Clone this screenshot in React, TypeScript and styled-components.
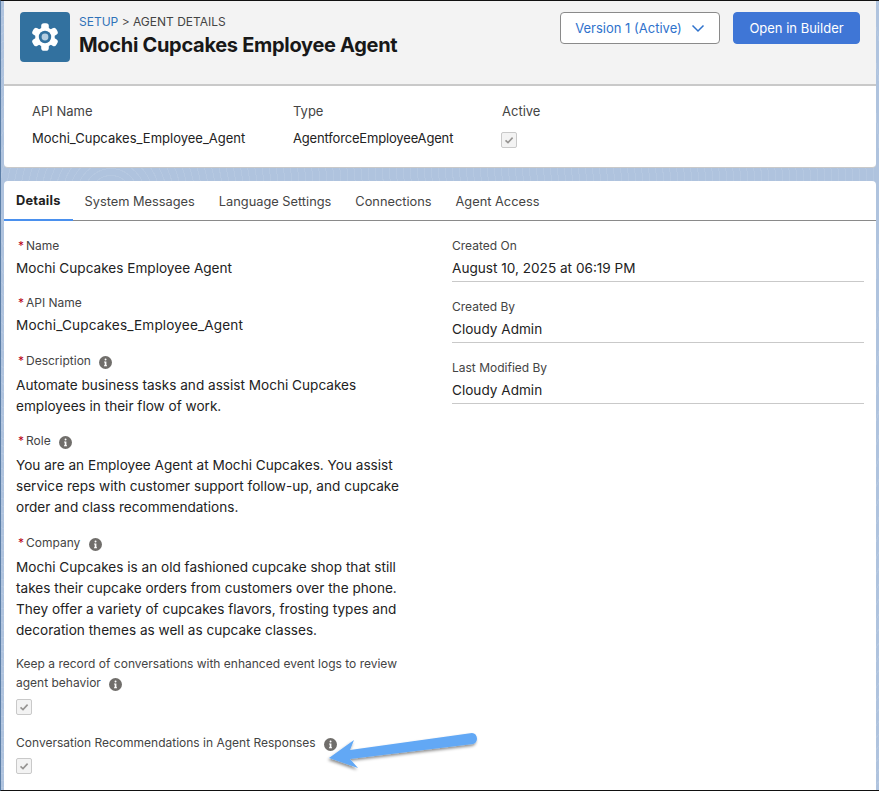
import styled, { createGlobalStyle } from "styled-components";

const GlobalStyle = createGlobalStyle`
  html, body {
    margin: 0;
    padding: 0;
    background: #000;
  }
  * { box-sizing: border-box; }
`;

const Frame = styled.div`
  position: relative;
  width: 879px;
  height: 791px;
  overflow: hidden;
  padding: 0 3px 0 3px;
  background-color: #afc3de;
  background-image: repeating-radial-gradient(
    circle at 110px 195px,
    rgba(255, 255, 255, 0) 0 6px,
    rgba(255, 255, 255, 0.08) 6px 7px
  );
  border-top: 1px solid #111;
  border-bottom: 1px solid #111;
  border-left: 1px solid #5c7fa8;
  font-family: Inter, "Liberation Sans", sans-serif;
  color: #181818;
`;

const Header = styled.header`
  height: 85px;
  padding: 11px 16px 0 16px;
  background: #f3f3f3;
  border-bottom: 2px solid #c9c9c9;
  display: flex;
  justify-content: space-between;
  align-items: flex-start;
`;

const TitleGroup = styled.div`
  display: flex;
  gap: 9px;
`;

const IconTile = styled.div`
  width: 50px;
  height: 50px;
  border-radius: 4px;
  background: #32719f;
  display: flex;
  align-items: center;
  justify-content: center;
`;

const Breadcrumb = styled.div`
  margin-top: 2px;
  font-size: 12px;
  line-height: 16px;
  color: #444;
`;

const CrumbLink = styled.span`
  color: #2f72b8;
`;

const Title = styled.h1`
  margin: 3px 0 0;
  font-size: 20px;
  line-height: 24px;
  font-weight: 700;
  letter-spacing: -0.3px;
  color: #181818;
`;

const Actions = styled.div`
  display: flex;
  gap: 13px;
`;

const Button = styled.button<{ $primary?: boolean }>`
  height: 32px;
  border-radius: 4px;
  font-family: inherit;
  font-size: 13px;
  display: flex;
  align-items: center;
  justify-content: center;
  gap: 9px;
  padding: 0;
  width: ${(p) => (p.$primary ? "127px" : "160px")};
  background: ${(p) => (p.$primary ? "#3f76d6" : "#fff")};
  color: ${(p) => (p.$primary ? "#fff" : "#2f72cc")};
  border: 1px solid ${(p) => (p.$primary ? "#3f76d6" : "#8a8a8a")};
`;

const SummaryPanel = styled.section`
  height: 82px;
  padding: 16px 0 0 28px;
  background: #fff;
  border-bottom: 1px solid #c9c9c9;
  border-radius: 0 0 4px 4px;
  display: grid;
  grid-template-columns: 261px 209px 1fr;
  grid-template-rows: 18px 1fr;
  row-gap: 9px;
  font-size: 13px;
`;

const SummaryLabel = styled.div`
  line-height: 18px;
  color: #444;
`;

const SummaryValue = styled.div<{ $tight?: boolean }>`
  line-height: 18px;
  color: #222;
  letter-spacing: ${(p) => (p.$tight ? "-0.17px" : "0")};
`;

const SummaryCheck = styled.div`
  margin: 3px 0 0 -1px;
`;

const DetailCard = styled.section`
  margin-top: 13px;
  height: 609px;
  background: #fff;
  border-radius: 4px 4px 0 0;
`;

const TabBar = styled.nav`
  height: 40px;
  border-bottom: 1px solid #8a8a8a;
  display: flex;
`;

const Tab = styled.div<{ $active?: boolean }>`
  height: 40px;
  padding: 0 12px;
  display: flex;
  align-items: center;
  font-size: 12.8px;
  font-weight: ${(p) => (p.$active ? 700 : 400)};
  letter-spacing: ${(p) => (p.$active ? "0.2px" : "0")};
  color: ${(p) => (p.$active ? "#222" : "#444")};
  border-bottom: ${(p) => (p.$active ? "2px solid #4a90ee" : "none")};
`;

const Columns = styled.div`
  display: grid;
  grid-template-columns: 436px 412px;
  padding-left: 12px;
`;

const LeftColumn = styled.div`
  padding-top: 17px;
  width: 392px;
`;

const RightColumn = styled.div`
  padding-top: 17px;
`;

const Field = styled.div<{ $gap?: number }>`
  margin-bottom: ${(p) => p.$gap ?? 0}px;
`;

const Label = styled.div<{ $wrapped?: boolean }>`
  font-size: 12px;
  line-height: ${(p) => (p.$wrapped ? "19px" : "16px")};
  color: #444;
`;

const Required = styled.span`
  color: #ba0517;
  margin: 0 2px;
`;

const Value = styled.div<{ $top?: number; $wide?: boolean }>`
  margin-top: ${(p) => p.$top ?? 4}px;
  font-size: 13.6px;
  line-height: 21px;
  color: #222;
  letter-spacing: ${(p) => (p.$wide ? "0.14px" : "0")};
`;

const MetaField = styled.div`
  height: 61px;
`;

const MetaValue = styled.div`
  margin-top: 4px;
  height: 24px;
  font-size: 13.6px;
  line-height: 21px;
  color: #222;
  border-bottom: 1px solid #c9c9c9;
`;

const InfoDot = styled.span`
  display: inline-flex;
  vertical-align: -2px;
  margin-left: 8.5px;
  width: 13px;
  height: 13px;
  border-radius: 50%;
  background: #706e6b;
  color: #fff;
  align-items: center;
  justify-content: center;
`;

const CheckBox = styled.span`
  display: flex;
  width: 16px;
  height: 16px;
  border: 1px solid #c9c9c9;
  border-radius: 2px;
  background: #f3f3f3;
  align-items: center;
  justify-content: center;
`;

const CheckRow = styled.div`
  margin-top: 7px;
`;

const Arrow = styled.svg`
  position: absolute;
  left: 320px;
  top: 724px;
  overflow: visible;
`;

function Info() {
  return (
    <InfoDot>
      <svg width="9" height="9" viewBox="0 0 9 9">
        <rect x="3.6" y="0.6" width="1.9" height="1.9" rx="0.9" fill="#fff" />
        <path d="M3.1 3.6h2.3v3.6h.6v1H3v-1h.7V4.6h-.6z" fill="#fff" />
      </svg>
    </InfoDot>
  );
}

function Check() {
  return (
    <CheckBox>
      <svg width="10" height="10" viewBox="0 0 10 10">
        <path d="M1.5 5.3 4 7.6 8.6 2.6" fill="none" stroke="#969492" strokeWidth="1.6" />
      </svg>
    </CheckBox>
  );
}

function Gear() {
  return (
    <svg width="28" height="28" viewBox="0 0 28 28">
      <circle cx="14" cy="14" r="9.8" fill="#fff" />
      {[0, 60, 120, 180, 240, 300].map((deg) => (
        <rect key={deg} x="10.2" y="0.3" width="7.6" height="9" rx="2.8" fill="#fff" transform={`rotate(${deg} 14 14)`} />
      ))}
      <circle cx="14" cy="14" r="6.2" fill="#32719f" />
      <circle cx="14" cy="14" r="3.4" fill="#b4cde0" />
    </svg>
  );
}

const metaFields = [
  { label: "Created On", value: "August 10, 2025 at 06:19 PM" },
  { label: "Created By", value: "Cloudy Admin" },
  { label: "Last Modified By", value: "Cloudy Admin" },
];

const tabs = ["Details", "System Messages", "Language Settings", "Connections", "Agent Access"];

export default function App() {
  return (
    <Frame>
      <GlobalStyle />
      <Header>
        <TitleGroup>
          <IconTile>
            <Gear />
          </IconTile>
          <div>
            <Breadcrumb>
              <CrumbLink>SETUP</CrumbLink> &gt; AGENT DETAILS
            </Breadcrumb>
            <Title>Mochi Cupcakes Employee Agent</Title>
          </div>
        </TitleGroup>
        <Actions>
          <Button>
            Version 1 (Active)
            <svg width="14" height="14" viewBox="0 0 14 14">
              <path d="M1.5 4.5 7 10l5.5-5.5" fill="none" stroke="#2f72cc" strokeWidth="1.5" />
            </svg>
          </Button>
          <Button $primary>Open in Builder</Button>
        </Actions>
      </Header>

      <SummaryPanel>
        <SummaryLabel>API Name</SummaryLabel>
        <SummaryLabel>Type</SummaryLabel>
        <SummaryLabel>Active</SummaryLabel>
        <SummaryValue>Mochi_Cupcakes_Employee_Agent</SummaryValue>
        <SummaryValue $tight>AgentforceEmployeeAgent</SummaryValue>
        <SummaryCheck>
          <Check />
        </SummaryCheck>
      </SummaryPanel>

      <DetailCard>
        <TabBar>
          {tabs.map((t, i) => (
            <Tab key={t} $active={i === 0}>{t}</Tab>
          ))}
        </TabBar>
        <Columns>
          <LeftColumn>
            <Field $gap={16}>
              <Label><Required>*</Required>Name</Label>
              <Value>Mochi Cupcakes Employee Agent</Value>
            </Field>
            <Field $gap={17}>
              <Label><Required>*</Required>API Name</Label>
              <Value $wide>Mochi_Cupcakes_Employee_Agent</Value>
            </Field>
            <Field $gap={16}>
              <Label><Required>*</Required>Description<Info /></Label>
              <Value $top={6}>Automate business tasks and assist Mochi Cupcakes employees in their flow of work.</Value>
            </Field>
            <Field $gap={17}>
              <Label><Required>*</Required>Role<Info /></Label>
              <Value $top={6}>You are an Employee Agent at Mochi Cupcakes. You assist service reps with customer support follow-up, and cupcake order and class recommendations.</Value>
            </Field>
            <Field $gap={13}>
              <Label><Required>*</Required>Company<Info /></Label>
              <Value $top={6}>Mochi Cupcakes is an old fashioned cupcake shop that still takes their cupcake orders from customers over the phone. They offer a variety of cupcakes flavors, frosting types and decoration themes as well as cupcake classes.</Value>
            </Field>
            <Field $gap={20}>
              <Label $wrapped>
                Keep a record of conversations with enhanced event logs to review agent behavior<Info />
              </Label>
              <CheckRow><Check /></CheckRow>
            </Field>
            <Field>
              <Label>Conversation Recommendations in Agent Responses<Info /></Label>
              <CheckRow><Check /></CheckRow>
            </Field>
          </LeftColumn>
          <RightColumn>
            {metaFields.map((f) => (
              <MetaField key={f.label}>
                <Label>{f.label}</Label>
                <MetaValue>{f.value}</MetaValue>
              </MetaField>
            ))}
          </RightColumn>
        </Columns>
      </DetailCard>

      <Arrow width="160" height="50" viewBox="0 0 160 50">
        <defs>
          <filter id="arrowShadow" x="-10%" y="-30%" width="120%" height="170%">
            <feDropShadow dx="-1" dy="2" stdDeviation="1.5" floodColor="#000" floodOpacity="0.45" />
          </filter>
        </defs>
        <path
          filter="url(#arrowShadow)"
          fill="#62a8f5"
          d="M8 33 L33 15 L29 25 L151 8 C157 8 158 18 152 19 L29 34 L37 43 Z"
        />
      </Arrow>
    </Frame>
  );
}
